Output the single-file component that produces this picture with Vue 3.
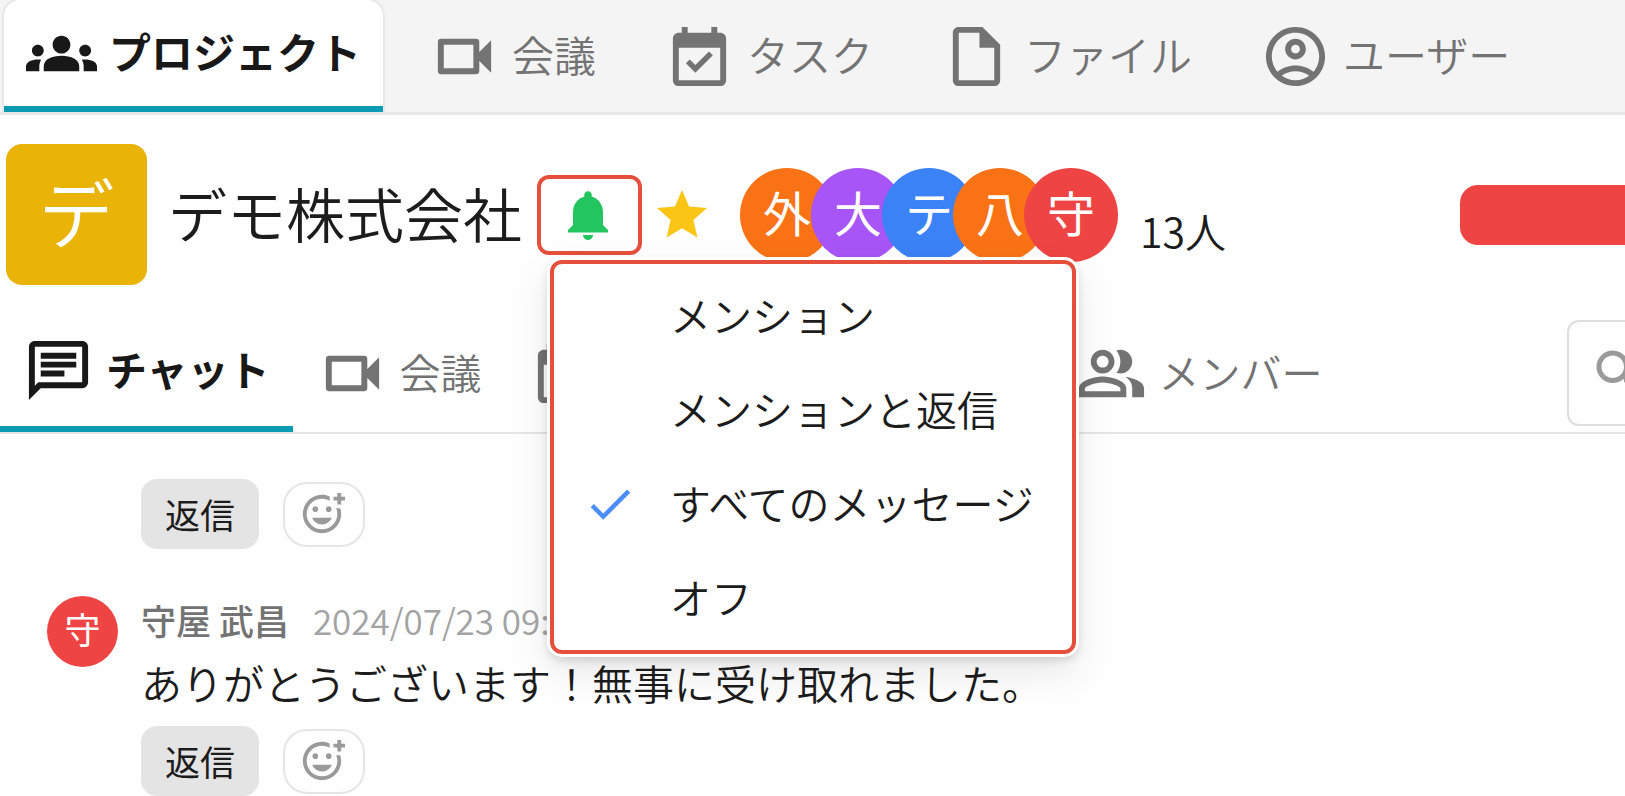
<script setup>
import { ref } from 'vue'

const icons = {
    groups: 'M12 12.75c1.63 0 3.07.39 4.24.9 1.08.48 1.76 1.56 1.76 2.73V18H6v-1.61c0-1.18.68-2.26 1.76-2.73 1.17-.52 2.61-.91 4.24-.91zM4 13c1.1 0 2-.9 2-2s-.9-2-2-2-2 .9-2 2 .9 2 2 2zm1.13 1.1c-.37-.06-.74-.1-1.13-.1-.99 0-1.93.21-2.78.58C.48 14.9 0 15.62 0 16.43V18h4.5v-1.61c0-.83.23-1.61.63-2.29zM20 13c1.1 0 2-.9 2-2s-.9-2-2-2-2 .9-2 2 .9 2 2 2zm4 3.43c0-.81-.48-1.53-1.22-1.85-.85-.37-1.79-.58-2.78-.58-.39 0-.76.04-1.13.1.4.68.63 1.46.63 2.29V18H24v-1.57zM12 6c1.66 0 3 1.34 3 3s-1.34 3-3 3-3-1.34-3-3 1.34-3 3-3z',
    video: 'M15 8v8H5V8h10m1-2H4c-.55 0-1 .45-1 1v10c0 .55.45 1 1 1h12c.55 0 1-.45 1-1v-3.5l4 4v-11l-4 4V7c0-.55-.45-1-1-1z',
    task: 'M16.53 11.56 15.2 10.3l-4.6 4.6-1.9-1.9-1.3 1.3 3.2 3.2 5.93-5.94zM19 4h-1V2h-2v2H8V2H6v2H5c-1.11 0-1.99.9-1.99 2L3 20c0 1.1.89 2 2 2h14c1.1 0 2-.9 2-2V6c0-1.1-.9-2-2-2zm0 16H5V9h14v11z',
    file: 'M14 2H6c-1.1 0-2 .9-2 2v16c0 1.1.89 2 1.99 2H18c1.1 0 2-.9 2-2V8l-6-6zM6 20V4h7v5h5v11H6z',
    user: 'M12 2C6.48 2 2 6.48 2 12s4.48 10 10 10 10-4.48 10-10S17.52 2 12 2zM7.35 18.5C8.66 17.56 10.26 17 12 17s3.34.56 4.65 1.5C15.34 19.44 13.74 20 12 20s-3.34-.56-4.65-1.5zm10.79-1.38C16.45 15.8 14.32 15 12 15s-4.45.8-6.14 2.12C4.7 15.73 4 13.95 4 12c0-4.42 3.58-8 8-8s8 3.58 8 8c0 1.95-.7 3.73-1.86 5.12zM12 6c-1.93 0-3.5 1.57-3.5 3.5S10.07 13 12 13s3.5-1.57 3.5-3.5S13.93 6 12 6zm0 5c-.83 0-1.5-.67-1.5-1.5S11.17 8 12 8s1.5.67 1.5 1.5S12.83 11 12 11z',
    chat: 'M4 4h16v12H5.17L4 17.17V4m0-2c-1.1 0-1.99.9-1.99 2L2 22l4-4h14c1.1 0 2-.9 2-2V4c0-1.1-.9-2-2-2H4zm2 10h8v2H6v-2zm0-3h12v2H6V9zm0-3h12v2H6V6z',
    members: 'M16.67 13.13C18.04 14.06 19 15.32 19 17v3h4v-3c0-2.18-3.57-3.47-6.33-3.87zM15 12c2.21 0 4-1.79 4-4s-1.79-4-4-4c-.47 0-.91.1-1.33.24C14.5 5.27 15 6.58 15 8s-.5 2.73-1.33 3.76c.42.14.86.24 1.33.24zM9 12c2.21 0 4-1.79 4-4s-1.79-4-4-4-4 1.79-4 4 1.79 4 4 4zm0-6c1.1 0 2 .9 2 2s-.9 2-2 2-2-.9-2-2 .9-2 2-2zM9 13c-2.67 0-8 1.34-8 4v3h16v-3c0-2.66-5.33-4-8-4zm6 5H3v-.99C3.2 16.29 6.3 15 9 15s5.8 1.29 6 2v1z',
    bell: 'M12 22c1.1 0 2-.9 2-2h-4c0 1.1.9 2 2 2zm6-6v-5c0-3.07-1.63-5.64-4.5-6.32V4c0-.83-.67-1.5-1.5-1.5s-1.5.67-1.5 1.5v.68C7.64 5.36 6 7.92 6 11v5l-2 2v1h16v-1l-2-2z',
    star: 'M12 17.27 18.18 21l-1.64-7.03L22 9.24l-7.19-.61L12 2 9.19 8.63 2 9.24l5.46 4.73L5.82 21z',
    check: 'M9 16.17 4.83 12l-1.42 1.41L9 19 21 7l-1.41-1.41z',
    search: 'M15.5 14h-.79l-.28-.27C15.41 12.59 16 11.11 16 9.5 16 5.91 13.09 3 9.5 3S3 5.91 3 9.5 5.91 16 9.5 16c1.61 0 3.09-.59 4.23-1.57l.27.28v.79l5 4.99L20.49 19l-4.99-5zm-6 0C7.01 14 5 11.99 5 9.5S7.01 5 9.5 5 14 7.01 14 9.5 11.99 14 9.5 14z',
    reaction: 'M7 9.5C7 8.67 7.67 8 8.5 8s1.5.67 1.5 1.5S9.33 11 8.5 11 7 10.33 7 9.5zm5 8c2.33 0 4.31-1.46 5.11-3.5H6.89c.8 2.04 2.78 3.5 5.11 3.5zm3.5-6.5c.83 0 1.5-.67 1.5-1.5S16.33 8 15.5 8 14 8.67 14 9.5s.67 1.5 1.5 1.5zM22 1h-2v2h-2v2h2v2h2V5h2V3h-2V1zm-2 11c0 4.42-3.58 8-8 8s-8-3.58-8-8 3.58-8 8-8c1.46 0 2.82.4 4 1.08V2.84C14.77 2.3 13.42 2 11.99 2 6.47 2 2 6.48 2 12s4.47 10 9.99 10C17.52 22 22 17.52 22 12c0-1.05-.17-2.05-.47-3h-2.13c.38.93.6 1.94.6 3z'
}

const mainTabs = [
    { label: 'プロジェクト', icon: 'groups' },
    { label: '会議', icon: 'video' },
    { label: 'タスク', icon: 'task' },
    { label: 'ファイル', icon: 'file' },
    { label: 'ユーザー', icon: 'user' }
]

const subTabs = [
    { label: 'チャット', icon: 'chat' },
    { label: '会議', icon: 'video' },
    { label: 'タスク', icon: 'task' },
    { label: 'ファイル', icon: 'file' },
    { label: 'メンバー', icon: 'members' }
]

const members = [
    { initial: '外', color: 'orange' },
    { initial: '大', color: 'purple' },
    { initial: 'テ', color: 'blue' },
    { initial: '八', color: 'orange' },
    { initial: '守', color: 'red' }
]

const notifyOptions = ['メンション', 'メンションと返信', 'すべてのメッセージ', 'オフ']

const messages = [
    { id: 1 },
    { id: 2, initial: '守', author: '守屋 武昌', time: '2024/07/23 09:', text: 'ありがとうございます！無事に受け取れました。' }
]

const selected = ref('すべてのメッセージ')
const menuOpen = ref(true)
const keyword = ref('')
</script>

<template>
    <div class="page">
        <nav class="main-nav">
            <a v-for="(tab, i) in mainTabs" :key="tab.label" href="#" class="tab" :class="{ active: i === 0 }">
                <svg class="tab-icon" viewBox="0 0 24 24"><path :d="icons[tab.icon]" /></svg>
                <span class="tab-label">{{ tab.label }}</span>
            </a>
        </nav>

        <header class="project-header">
            <div class="project-logo">デ</div>
            <h1 class="project-title">デモ株式会社</h1>
            <div class="notify">
                <button class="notify-button" type="button" aria-label="通知設定" @click="menuOpen = !menuOpen">
                    <svg class="header-icon" viewBox="0 0 24 24"><path :d="icons.bell" /></svg>
                </button>
                <div v-if="menuOpen" class="notify-menu" role="menu">
                    <button v-for="option in notifyOptions" :key="option" type="button" class="notify-option"
                        role="menuitemradio" :aria-checked="selected === option" @click="selected = option">
                        <span class="check">
                            <svg v-if="selected === option" viewBox="0 0 24 24"><path :d="icons.check" /></svg>
                        </span>
                        <span class="option-label">{{ option }}</span>
                    </button>
                </div>
            </div>
            <button class="star-button" type="button" aria-label="お気に入り">
                <svg class="header-icon" viewBox="0 0 24 24"><path :d="icons.star" /></svg>
            </button>
            <div class="members">
                <span v-for="member in members" :key="member.initial" class="member" :class="member.color">{{ member.initial }}</span>
            </div>
            <span class="member-count">13人</span>
            <button class="action-button" type="button" aria-label="アクション"></button>
        </header>

        <div class="sub-bar">
            <nav class="sub-nav">
                <a v-for="(tab, i) in subTabs" :key="tab.label" href="#" class="tab" :class="{ active: i === 0 }">
                    <svg class="tab-icon" viewBox="0 0 24 24"><path :d="icons[tab.icon]" /></svg>
                    <span class="tab-label">{{ tab.label }}</span>
                </a>
            </nav>
            <label class="search">
                <svg class="search-icon" viewBox="0 0 24 24"><path :d="icons.search" /></svg>
                <input v-model="keyword" class="search-input" type="search" aria-label="検索" />
            </label>
        </div>

        <main class="messages">
            <article v-for="message in messages" :key="message.id" class="message">
                <div class="message-side">
                    <span v-if="message.initial" class="message-avatar">{{ message.initial }}</span>
                </div>
                <div class="message-body">
                    <template v-if="message.text">
                        <div class="message-meta">
                            <span class="message-author">{{ message.author }}</span>
                            <time class="message-time">{{ message.time }}</time>
                        </div>
                        <p class="message-text">{{ message.text }}</p>
                    </template>
                    <div class="message-actions">
                        <button class="reply-button" type="button">返信</button>
                        <button class="reaction-button" type="button" aria-label="リアクション">
                            <svg class="reaction-icon" viewBox="0 0 24 24"><path :d="icons.reaction" /></svg>
                        </button>
                    </div>
                </div>
            </article>
        </main>
    </div>
</template>

<style>
body {
    margin: 0;
    background: #fefefe;
}
</style>

<style scoped>
.page {
    height: 100vh;
    overflow: hidden;
    background: #fefefe;
    color: #1c1c1c;
    font-family: "Noto Sans CJK JP", sans-serif;
    font-size: 41px;
    font-weight: 350;
}

.page * {
    box-sizing: border-box;
}

button {
    padding: 0;
    border: 0;
    background: none;
    color: inherit;
    font: inherit;
    cursor: pointer;
}

svg {
    display: block;
    flex: none;
    fill: currentColor;
}

.main-nav {
    display: flex;
    gap: 24px;
    height: 115px;
    padding: 0 4px;
    background: #f4f4f4;
    border-bottom: 3px solid #e8e8e8;
    font-size: 42px;
}

.tab {
    display: flex;
    align-items: center;
    gap: 12px;
    padding: 0 22px;
    color: #737373;
    line-height: 60px;
    text-decoration: none;
    white-space: nowrap;
}

.tab.active {
    color: #181818;
    font-weight: 700;
    border-bottom: 6px solid #089bb3;
}

.main-nav .tab.active {
    background: #fff;
    border-radius: 16px 16px 0 0;
    box-shadow: 0 0 0 2px #e8e8e8;
}

.tab-icon {
    width: 71px;
    height: 71px;
}

.tab-label {
    padding-bottom: 4px;
}

.project-header {
    display: flex;
    align-items: center;
    padding: 29px 0 29px 6px;
}

.project-logo {
    width: 141px;
    height: 141px;
    border-radius: 16px;
    background: #eab308;
    color: #fff;
    font-size: 76px;
    line-height: 132px;
    text-align: center;
}

.project-title {
    margin: 0 15px 0 21px;
    padding-bottom: 4px;
    font-size: 59px;
    font-weight: inherit;
    line-height: 80px;
    white-space: nowrap;
}

.notify {
    position: relative;
    margin-right: 10px;
}

.notify-button {
    display: flex;
    align-items: center;
    justify-content: center;
    width: 105px;
    height: 80px;
    padding-right: 4px;
    border: 4px solid #e5503c;
    border-radius: 12px;
    color: #22c55e;
}

.header-icon {
    width: 60px;
    height: 60px;
}

.notify-menu {
    position: absolute;
    z-index: 10;
    top: 85px;
    left: 13px;
    width: 526px;
    padding: 5px 0;
    border: 4px solid #e5503c;
    border-radius: 12px;
    background: #fefefe;
    box-shadow: 0 0 0 3px #fefefe, 0 4px 8px 2px rgba(0, 0, 0, 0.14), 0 16px 40px rgba(0, 0, 0, 0.1);
}

.notify-option {
    display: flex;
    align-items: center;
    gap: 33px;
    width: 100%;
    height: 94px;
    padding-left: 29px;
    line-height: 60px;
    white-space: nowrap;
}

.option-label {
    padding-bottom: 4px;
}

.check {
    width: 54px;
    height: 54px;
    color: #4b8dfb;
}

.star-button {
    margin-right: 28px;
    color: #fbc516;
}

.members {
    display: flex;
}

.member {
    width: 94px;
    height: 94px;
    border-radius: 50%;
    color: #fff;
    font-size: 48px;
    font-weight: 400;
    line-height: 86px;
    text-align: center;
}

.member + .member {
    margin-left: -23px;
}

.orange {
    background: #f97316;
}

.purple {
    background: #a855f7;
}

.blue {
    background: #3b82f6;
}

.red {
    background: #ef4444;
}

.member-count {
    padding-top: 30px;
    margin-left: 22px;
    line-height: 60px;
    white-space: nowrap;
}

.action-button {
    width: 165px;
    height: 60px;
    margin-left: auto;
    border-radius: 18px 0 0 18px;
    background: #ef4444;
}

.sub-bar {
    display: flex;
    align-items: center;
    justify-content: space-between;
    height: 120px;
    border-bottom: 2px solid #e5e5e5;
}

.sub-nav {
    display: flex;
    align-self: stretch;
    gap: 1px;
}

.sub-nav .tab {
    padding: 0 23px;
}

.search {
    display: flex;
    align-items: center;
    width: 58px;
    height: 106px;
    padding-left: 20px;
    overflow: hidden;
    border: 2px solid #dedede;
    border-right: 0;
    border-radius: 12px 0 0 12px;
    color: #9a9a9a;
}

.search-icon {
    width: 60px;
    height: 60px;
}

.search-input {
    flex: 1;
    min-width: 0;
    border: 0;
    outline: 0;
    background: none;
    font: inherit;
}

.messages {
    display: flex;
    flex-direction: column;
    gap: 47px;
    padding: 45px 0 0 47px;
}

.message {
    display: flex;
    gap: 23px;
}

.message-side {
    width: 71px;
}

.message-avatar {
    display: block;
    height: 71px;
    border-radius: 50%;
    background: #ef4444;
    color: #fff;
    font-size: 36px;
    font-weight: 400;
    line-height: 64px;
    text-align: center;
}

.message-meta {
    display: flex;
    gap: 24px;
    font-size: 35px;
    line-height: 48px;
}

.message-author {
    color: #737373;
    font-weight: 500;
}

.message-time {
    color: #a3a3a3;
}

.message-text {
    margin: 0;
    line-height: 76px;
}

.message-text + .message-actions {
    margin-top: 6px;
}

.message-actions {
    display: flex;
    align-items: center;
    gap: 24px;
}

.reply-button {
    width: 118px;
    height: 70px;
    border-radius: 16px;
    background: #e4e4e4;
    font-size: 35px;
    font-weight: 400;
    line-height: 66px;
}

.reaction-button {
    display: flex;
    align-items: center;
    justify-content: center;
    width: 82px;
    height: 65px;
    padding-right: 4px;
    border: 2px solid #e5e5e5;
    border-radius: 24px;
    color: #9a9a9a;
}

.reaction-icon {
    width: 46px;
    height: 46px;
}
</style>
